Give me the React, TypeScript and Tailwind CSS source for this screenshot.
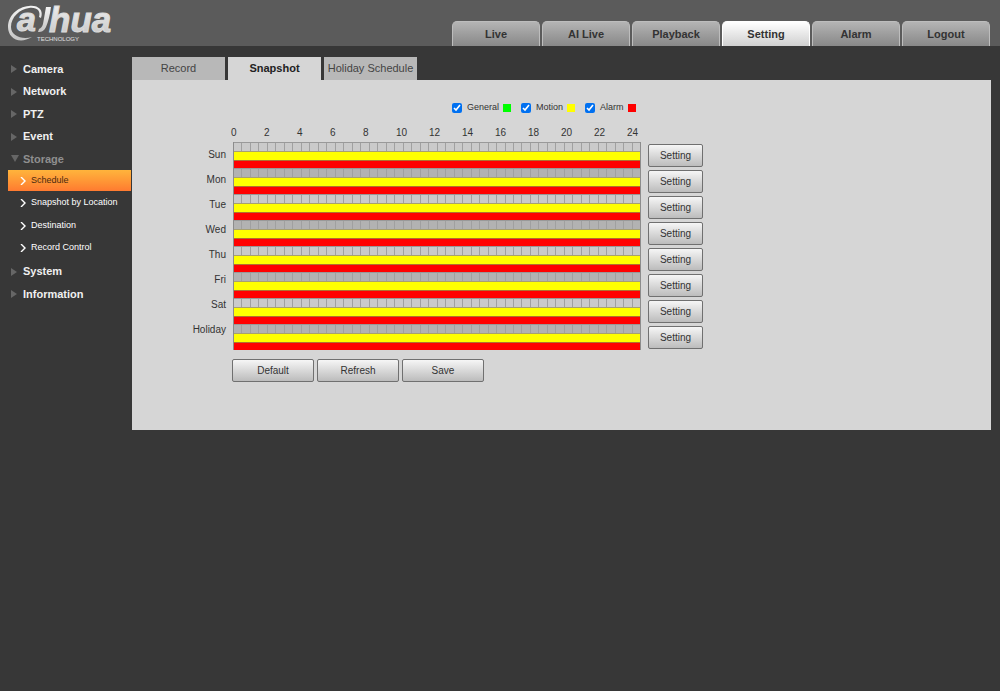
import React, { useState } from 'react';

const NAV_ITEMS = ['Live', 'AI Live', 'Playback', 'Setting', 'Alarm', 'Logout'];

const MENU = ['Camera', 'Network', 'PTZ', 'Event', 'Storage', 'System', 'Information'];
const STORAGE_MENU = ['Schedule', 'Snapshot by Location', 'Destination', 'Record Control'];

const TABS = ['Record', 'Snapshot', 'Holiday Schedule'];

const HOURS = [0, 2, 4, 6, 8, 10, 12, 14, 16, 18, 20, 22, 24];
const DAYS = ['Sun', 'Mon', 'Tue', 'Wed', 'Thu', 'Fri', 'Sat', 'Holiday'];

const LEGEND = [
  { label: 'General', color: 'bg-[#00ff00]' },
  { label: 'Motion', color: 'bg-[#ffff00]' },
  { label: 'Alarm', color: 'bg-[#ff0000]' },
];

const Logo: React.FC = () => (
  <svg className="h-[46px] w-[120px] overflow-visible" viewBox="0 0 120 46" role="img" aria-label="alhua Technology">
    <defs>
      <linearGradient id="silver" x1="0" y1="0" x2="0" y2="1">
        <stop offset="0" stopColor="#f4f4f4" />
        <stop offset="1" stopColor="#c4c4c4" />
      </linearGradient>
    </defs>
    {/* swoosh round the first letter */}
    <path
      d="M41 18 C44 10 38 5 29 6 C17 7 8 16 8 27 C8 38 19 45 32 37 C22 40 11 36 11 27 C11 17 20 9 29 8 C37 7 41 11 39 17 Z"
      fill="url(#silver)"
    />
    <path
      d="M46 7 H51 C50 15 48 22 46 27 C44 31 42 32 38 32 L39 29 C41 28 42 27 43 24 Z"
      fill="url(#silver)"
    />
    <g
      fill="url(#silver)"
      stroke="#dcdcdc"
      strokeWidth="1"
      fontFamily="Liberation Sans, Arial, sans-serif"
      fontWeight="700"
      fontStyle="italic"
    >
      <text x="17" y="31" fontSize="34">
        a
      </text>
      <text x="49" y="32" fontSize="35">
        hua
      </text>
    </g>
    <text x="37" y="41" fontSize="6" fill="#e0e0e0" fontFamily="Liberation Sans, Arial, sans-serif">
      TECHNOLOGY
    </text>
  </svg>
);

const Header: React.FC = () => (
  <header className="flex h-[46px] items-end justify-between bg-[#5b5b5b] pr-[10px]">
    <Logo />
    <nav className="flex gap-[2px]">
      {NAV_ITEMS.map((item) => (
        <button
          key={item}
          className={`h-[25px] w-[88px] rounded-t-[5px] border border-b-0 text-[11px] font-bold text-[#333] ${
            item === 'Setting'
              ? 'border-white bg-linear-to-b from-white to-[#d0d0d0]'
              : 'border-[#bdbdbd] bg-linear-to-b from-[#b4b4b4] to-[#888]'
          }`}
        >
          {item}
        </button>
      ))}
    </nav>
  </header>
);

const Sidebar: React.FC = () => (
  <aside className="w-[132px] shrink-0 pt-3">
    <ul>
      {MENU.map((item) => {
        const open = item === 'Storage';
        return (
          <li key={item} className="group">
            <button
              className={`flex h-[22px] w-full items-center gap-[6px] pl-[11px] text-[11px] font-bold group-even:h-[23px] ${
                open ? 'text-[#8f8f8f]' : 'text-[#f0f0f0]'
              }`}
            >
              <svg className="h-[8px] w-[6px] overflow-visible" viewBox="0 0 6 8">
                {open ? <path d="M0 0H8L4 7Z" fill="#666" /> : <path d="M0 0L6 4L0 8Z" fill="#666" />}
              </svg>
              {item}
            </button>
            {open && (
              <ul className="pl-2 pr-px">
                {STORAGE_MENU.map((sub) => (
                  <li key={sub} className="h-[22px] even:h-[23px]">
                    <button
                      className={`flex h-[21px] w-full items-center gap-[5px] whitespace-nowrap pl-3 text-[9px] ${
                        sub === 'Schedule'
                          ? 'bg-linear-to-b from-[#ffb43c] to-[#ff7a30] text-[#4a2a10]'
                          : 'text-white'
                      }`}
                    >
                      <svg className="h-[8px] w-[6px]" viewBox="0 0 6 8" fill="none" stroke="white">
                        <path d="M1 0L5 4L1 8" strokeWidth="1.4" />
                      </svg>
                      {sub}
                    </button>
                  </li>
                ))}
              </ul>
            )}
          </li>
        );
      })}
    </ul>
  </aside>
);

const BevelButton: React.FC<{ className: string; children: React.ReactNode }> = ({ className, children }) => (
  <button
    className={`h-[23px] rounded-[2px] border border-[#707070] bg-linear-to-b from-[#f6f6f6] to-[#bcbcbc] text-[10px] text-[#333] ${className}`}
  >
    {children}
  </button>
);

const Timeline: React.FC = () => (
  <div className="w-[408px] border-x border-[#8c8c8c]">
    {DAYS.map((day, i) => (
      <div key={day}>
        <div className={`flex h-[9px] border-t border-[#999] ${i % 2 ? 'bg-[#b2b2b2]' : 'bg-[#cacaca]'}`}>
          {Array.from({ length: 48 }, (_, n) => (
            <div key={n} className="flex-1 border-r border-[#a0a0a0] last:border-r-0" />
          ))}
        </div>
        <div className="h-[9px] border-t border-[#a8a070] bg-[#ffff00]" />
        <div className="h-[8px] border-t border-[#b07030] bg-[#ff0000]" />
      </div>
    ))}
  </div>
);

const App: React.FC = () => {
  const [shown, setShown] = useState<Record<string, boolean>>({ General: true, Motion: true, Alarm: true });

  return (
    <div className="min-h-screen bg-[#373737] font-['Liberation_Sans',Arial,sans-serif]">
      <Header />
      <div className="flex pr-[9px]">
        <Sidebar />
        <main className="flex-1 pt-[11px]">
          <div className="flex gap-[3px]">
            {TABS.map((tab) => (
              <button
                key={tab}
                className={`h-[23px] w-[93px] whitespace-nowrap text-[11px] ${
                  tab === 'Snapshot' ? 'bg-[#d6d6d6] font-bold text-[#222]' : 'bg-[#b8b8b8] text-[#444]'
                }`}
              >
                {tab}
              </button>
            ))}
          </div>

          <section className="bg-[#d6d6d6] pb-12 text-[10px] text-[#333]">
            <div className="flex gap-[10px] pl-[320px] pt-[21px] text-[9px]">
              {LEGEND.map(({ label, color }) => (
                <label key={label} className="flex h-[14px] items-center gap-[4px]">
                  <input
                    type="checkbox"
                    className="mr-px size-[10px] accent-[#0070f0]"
                    checked={shown[label]}
                    onChange={() => setShown({ ...shown, [label]: !shown[label] })}
                  />
                  {label}
                  <span className={`size-[8px] ${color}`} />
                </label>
              ))}
            </div>

            <div className="flex pl-[99px] pt-[10px]">
              {HOURS.map((hour) => (
                <span key={hour} className="h-[16px] w-[33px] leading-[16px]">
                  {hour}
                </span>
              ))}
            </div>

            <div className="flex pt-px">
              <div className="mr-[7px] w-[94px] text-right">
                {DAYS.map((day) => (
                  <div key={day} className="h-[25px] leading-[25px]">
                    {day}
                  </div>
                ))}
              </div>
              <Timeline />
              <div className="ml-[7px] flex flex-col gap-[3px] pt-[2px]">
                {DAYS.map((day) => (
                  <BevelButton key={day} className="w-[55px]">
                    Setting
                  </BevelButton>
                ))}
              </div>
            </div>

            <div className="flex gap-[3px] pl-[100px] pt-[9px]">
              <BevelButton className="w-[82px]">Default</BevelButton>
              <BevelButton className="w-[82px]">Refresh</BevelButton>
              <BevelButton className="w-[82px]">Save</BevelButton>
            </div>
          </section>
        </main>
      </div>
    </div>
  );
};

export default App;
